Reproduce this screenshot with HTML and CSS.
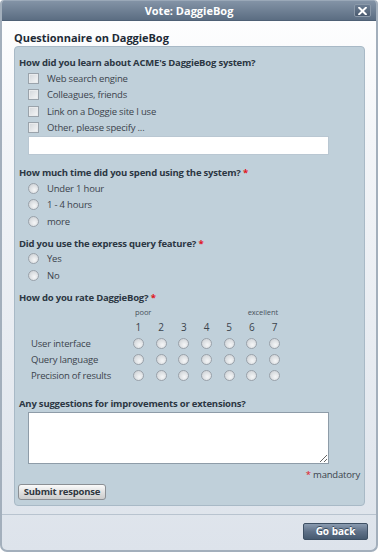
FILE: index.html
```html
<!DOCTYPE html>
<html>
<head>
<meta charset="utf-8">
<link rel="stylesheet" href="styles.css">
</head>
<body>
<div class="window">
  <div class="titlebar">
    <span class="title">Vote: DaggieBog</span>
    <button class="close" aria-label="Close">
      <svg width="9" height="8" viewBox="0 0 9 8"><path d="M1.2 0.8 L7.8 7.2 M7.8 0.8 L1.2 7.2" stroke="#fff" stroke-width="2" stroke-linecap="square"/></svg>
    </button>
  </div>
  <div class="content">
    <h1 class="heading">Questionnaire on DaggieBog</h1>
    <form class="panel">
      <div class="q q-first">
        <div class="q-title">How did you learn about ACME's DaggieBog system?</div>
        <label class="opt"><input type="checkbox" class="cb"><span>Web search engine</span></label>
        <label class="opt"><input type="checkbox" class="cb"><span>Colleagues, friends</span></label>
        <label class="opt"><input type="checkbox" class="cb"><span>Link on a Doggie site I use</span></label>
        <label class="opt"><input type="checkbox" class="cb"><span>Other, please specify ...</span></label>
        <input type="text" class="field">
      </div>
      <div class="q q-second">
        <div class="q-title">How much time did you spend using the system? <span class="req">*</span></div>
        <label class="opt"><input type="radio" name="time" class="rb"><span>Under 1 hour</span></label>
        <label class="opt"><input type="radio" name="time" class="rb"><span>1 - 4 hours</span></label>
        <label class="opt"><input type="radio" name="time" class="rb"><span>more</span></label>
      </div>
      <div class="q q-third">
        <div class="q-title">Did you use the express query feature? <span class="req">*</span></div>
        <label class="opt"><input type="radio" name="express" class="rb"><span>Yes</span></label>
        <label class="opt"><input type="radio" name="express" class="rb"><span>No</span></label>
      </div>
      <div class="q q-rate">
        <div class="q-title">How do you rate DaggieBog? <span class="req">*</span></div>
        <div class="rating">
          <div class="scale-row">
            <span class="scale-lo">poor</span>
            <span class="scale-hi">excellent</span>
          </div>
          <div class="r-row r-head">
            <span class="r-label"></span>
            <span class="r-cell">1</span><span class="r-cell">2</span><span class="r-cell">3</span><span class="r-cell">4</span><span class="r-cell">5</span><span class="r-cell">6</span><span class="r-cell">7</span>
          </div>
          <div class="r-row">
            <span class="r-label">User interface</span>
            <span class="r-cell"><input type="radio" name="ui" class="rb"></span><span class="r-cell"><input type="radio" name="ui" class="rb"></span><span class="r-cell"><input type="radio" name="ui" class="rb"></span><span class="r-cell"><input type="radio" name="ui" class="rb"></span><span class="r-cell"><input type="radio" name="ui" class="rb"></span><span class="r-cell"><input type="radio" name="ui" class="rb"></span><span class="r-cell"><input type="radio" name="ui" class="rb"></span>
          </div>
          <div class="r-row">
            <span class="r-label">Query language</span>
            <span class="r-cell"><input type="radio" name="ql" class="rb"></span><span class="r-cell"><input type="radio" name="ql" class="rb"></span><span class="r-cell"><input type="radio" name="ql" class="rb"></span><span class="r-cell"><input type="radio" name="ql" class="rb"></span><span class="r-cell"><input type="radio" name="ql" class="rb"></span><span class="r-cell"><input type="radio" name="ql" class="rb"></span><span class="r-cell"><input type="radio" name="ql" class="rb"></span>
          </div>
          <div class="r-row">
            <span class="r-label">Precision of results</span>
            <span class="r-cell"><input type="radio" name="pr" class="rb"></span><span class="r-cell"><input type="radio" name="pr" class="rb"></span><span class="r-cell"><input type="radio" name="pr" class="rb"></span><span class="r-cell"><input type="radio" name="pr" class="rb"></span><span class="r-cell"><input type="radio" name="pr" class="rb"></span><span class="r-cell"><input type="radio" name="pr" class="rb"></span><span class="r-cell"><input type="radio" name="pr" class="rb"></span>
          </div>
        </div>
      </div>
      <div class="q q-last">
        <div class="q-title">Any suggestions for improvements or extensions?</div>
        <textarea class="area"></textarea>
        <div class="mandatory"><span class="req">*</span> mandatory</div>
        <button type="button" class="submit">Submit response</button>
      </div>
    </form>
  </div>
  <div class="footer">
    <button type="button" class="goback">Go back</button>
  </div>
</div>
</body>
</html>
```
FILE: styles.css
```css
* { box-sizing: border-box; }
html, body { margin: 0; padding: 0; }
body {
  width: 378px;
  height: 552px;
  font-family: "Open Sans", "Noto Sans", sans-serif;
  font-size: 9.5px;
  letter-spacing: -0.2px;
  color: #38414b;
  background: #fff;
}
.window {
  width: 378px;
  height: 552px;
  display: flex;
  flex-direction: column;
  border: 2px solid #a3afbc;
  border-top: none;
  border-radius: 4px 4px 7px 7px;
  background: linear-gradient(#ffffff 0%, #f3f5f8 25%, #dde3eb 100%);
  overflow: hidden;
}
.titlebar {
  height: 21px;
  flex: none;
  margin: 0 -2px;
  position: relative;
  display: flex;
  align-items: center;
  justify-content: center;
  background: linear-gradient(#8393a6, #5b6d82);
  border-top: 1px solid #9aa8b8;
  border-bottom: 1px solid #4e6075;
}
.title {
  color: #fff;
  font-weight: bold;
  font-size: 11px;
  letter-spacing: 0;
}
.close {
  position: absolute;
  right: 7px;
  top: 3px;
  width: 17px;
  height: 13px;
  padding: 0;
  display: flex;
  align-items: center;
  justify-content: center;
  background: linear-gradient(#6c7d92, #4a5b70);
  border: 1px solid #8a98a8;
  border-radius: 2px;
}
.content {
  flex: 1;
  padding: 0 11px 0 12px;
}
.heading {
  margin: 9px 0 0;
  font-size: 11px;
  line-height: 16px;
  font-weight: bold;
  letter-spacing: -0.05px;
  color: #1e2a36;
}
.panel {
  margin: 0;
  background: #c0d0da;
  border: 1px solid #a8b9c6;
  border-radius: 4px;
  padding: 9px 4px 5px 4px;
}
.q { display: flex; flex-direction: column; }
.q-second { margin-top: 11px; }
.q-third { margin-top: 7px; }
.q-rate { margin-top: 7px; }
.q-last { margin-top: 7px; }
.q-title {
  font-weight: bold;
  color: #2c3743;
  line-height: 14px;
}
.req { color: #e0141e; }
.opt {
  display: flex;
  align-items: center;
  height: 16.5px;
  padding-left: 9px;
}
.opt span { margin-left: 8px; color: #3b434c; }
.cb {
  appearance: none;
  -webkit-appearance: none;
  margin: 0;
  width: 11px;
  height: 11px;
  border: 1px solid #9aa3ab;
  background: linear-gradient(135deg, #d2d6da, #f6f7f8);
  box-shadow: inset 0 0 0 1px #e9ebed;
}
.rb {
  appearance: none;
  -webkit-appearance: none;
  margin: 0;
  width: 11px;
  height: 11px;
  border-radius: 50%;
  border: 1px solid #9aa2aa;
  background: radial-gradient(circle at 60% 65%, #f5f6f7 0%, #dcdfe2 55%, #c8ccd0 100%);
}
.field {
  margin: 0 0 0 9px;
  width: 301px;
  height: 19px;
  border: 1px solid #b9c7d2;
  background: #fff;
}
.rating { display: flex; flex-direction: column; padding-bottom: 6px; }
.scale-row {
  position: relative;
  height: 14px;
  margin-left: 115px;
  width: 144px;
  font-size: 7.5px;
  letter-spacing: -0.1px;
  line-height: 14px;
  color: #49525c;
}
.scale-lo { position: absolute; left: 1px; top: 0; }
.scale-hi { position: absolute; right: 0; top: 0; }
.r-row {
  display: grid;
  grid-template-columns: 96px repeat(7, 22.7px);
  height: 16px;
  align-items: center;
  padding-left: 12px;
}
.r-head { height: 17px; font-size: 10px; color: #3b434c; }
.r-label { color: #3b434c; }
.r-cell { display: flex; justify-content: center; }
.area {
  margin: 1px 0 0 9px;
  width: 301px;
  height: 52px;
  border: 1px solid #8e9ca8;
  background: #fff;
  resize: both;
}
.mandatory {
  text-align: right;
  line-height: 14px;
  margin-top: 4px;
  color: #3b434c;
}
.submit {
  align-self: flex-start;
  margin: 2px 0 0 -1px;
  height: 16px;
  width: 88px;
  padding: 0;
  font-family: inherit;
  font-size: 9.5px;
  letter-spacing: -0.2px;
  font-weight: bold;
  color: #2f3740;
  border: 1px solid #8b8f94;
  border-radius: 3px;
  background: linear-gradient(#fbfbfb, #dcdcdc 60%, #cdcdcd);
}
.footer {
  flex: none;
  margin-top: 8px;
  height: 40px;
  border-top: 1px solid #b8c3cf;
  display: flex;
  justify-content: flex-end;
  align-items: flex-start;
  padding: 8px 8px 0 0;
}
.goback {
  width: 65px;
  height: 17px;
  padding: 0;
  font-family: inherit;
  font-size: 10px;
  letter-spacing: 0;
  font-weight: bold;
  color: #fff;
  text-shadow: 0 -1px 0 #3b4b5d;
  border: 1px solid #3e5064;
  border-radius: 2px;
  background: linear-gradient(#8a9bb0, #5f7188 50%, #465a70);
}
```
